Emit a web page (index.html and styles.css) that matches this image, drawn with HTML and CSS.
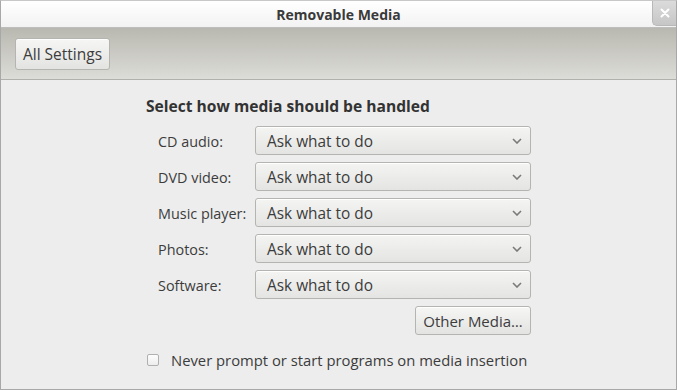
FILE: index.html
```html
<!DOCTYPE html>
<html lang="en">
<head>
  <meta charset="UTF-8" />
  <title>Removable Media</title>
  <link rel="stylesheet" href="styles.css">
</head>
<body>
  <div class="window">
    <header class="titlebar">
      <span class="title">Removable Media</span>
      <button class="close-btn" aria-label="Close">
        <svg width="10" height="10" viewBox="0 0 10 10"><path d="M1.5 1.5 L8.5 8.5 M8.5 1.5 L1.5 8.5" stroke="#fff" stroke-width="2" stroke-linecap="round"/></svg>
      </button>
    </header>

    <div class="toolbar">
      <button class="btn btn-settings">All Settings</button>
    </div>

    <main class="content">
      <h2 class="heading">Select how media should be handled</h2>

      <div class="media-grid">
        <label class="media-label">CD audio:</label>
        <div class="combo"><span>Ask what to do</span><svg class="chevron" width="10" height="6" viewBox="0 0 10 6"><path d="M1 1 L5 5 L9 1" fill="none" stroke="#7a7a7a" stroke-width="1.6"/></svg></div>

        <label class="media-label">DVD video:</label>
        <div class="combo"><span>Ask what to do</span><svg class="chevron" width="10" height="6" viewBox="0 0 10 6"><path d="M1 1 L5 5 L9 1" fill="none" stroke="#7a7a7a" stroke-width="1.6"/></svg></div>

        <label class="media-label">Music player:</label>
        <div class="combo"><span>Ask what to do</span><svg class="chevron" width="10" height="6" viewBox="0 0 10 6"><path d="M1 1 L5 5 L9 1" fill="none" stroke="#7a7a7a" stroke-width="1.6"/></svg></div>

        <label class="media-label">Photos:</label>
        <div class="combo"><span>Ask what to do</span><svg class="chevron" width="10" height="6" viewBox="0 0 10 6"><path d="M1 1 L5 5 L9 1" fill="none" stroke="#7a7a7a" stroke-width="1.6"/></svg></div>

        <label class="media-label">Software:</label>
        <div class="combo"><span>Ask what to do</span><svg class="chevron" width="10" height="6" viewBox="0 0 10 6"><path d="M1 1 L5 5 L9 1" fill="none" stroke="#7a7a7a" stroke-width="1.6"/></svg></div>
      </div>

      <div class="other-row">
        <button class="btn btn-other">Other Media…</button>
      </div>

      <label class="check-row">
        <span class="checkbox"></span>
        <span class="check-text">Never prompt or start programs on media insertion</span>
      </label>
    </main>
  </div>
</body>
</html>
```

FILE: styles.css
```css
:root {
  --text: #3c3c3c;
  --bg: #ededed;
  --border: #a8a8a8;
  --btn-border: #b4b4b0;
}

* {
  margin: 0;
  padding: 0;
  box-sizing: border-box;
}

body {
  font-family: 'Open Sans', 'DejaVu Sans', sans-serif;
  font-size: 14.4px;
  color: var(--text);
  background: #ffffff;
}

.window {
  width: 677px;
  height: 390px;
  border: 1px solid var(--border);
  border-top-color: #c8c8c8;
  background: var(--bg);
  display: flex;
  flex-direction: column;
  overflow: hidden;
}

.titlebar {
  position: relative;
  height: 27px;
  flex-shrink: 0;
  display: flex;
  align-items: center;
  justify-content: center;
  background: linear-gradient(#ffffff, #f2f2f2);
  border-bottom: 1px solid #bdbdbd;
}

.title {
  font-weight: 700;
  font-size: 14px;
  color: #3a3a3a;
}

.close-btn {
  position: absolute;
  right: 0;
  top: -1px;
  width: 24px;
  height: 26px;
  border: 1px solid #b8b8b8;
  border-top: none;
  border-right: none;
  border-radius: 0 0 0 5px;
  background: linear-gradient(#dcdcdc, #c6c6c6);
  display: flex;
  align-items: center;
  justify-content: center;
}

.toolbar {
  height: 52px;
  flex-shrink: 0;
  padding: 10px 14px;
  background: linear-gradient(#b9b8b0, #dcdcd8);
  border-bottom: 1px solid #b0b0ac;
}

.btn {
  font-family: inherit;
  font-size: 14.4px;
  color: var(--text);
  height: 32px;
  padding: 0 7px;
  border: 1px solid var(--btn-border);
  border-radius: 3px;
  background: linear-gradient(#f6f6f5, #e3e3e1);
  box-shadow: inset 0 1px 0 #ffffff;
}

.btn-settings {
  width: 95px;
  font-size: 15.5px;
  padding: 0;
}

.content {
  width: 385px;
  margin: 0 auto;
  padding-top: 16px;
}

.heading {
  font-size: 15.6px;
  font-weight: 700;
  line-height: 20px;
  color: #333333;
  margin-bottom: 10px;
}

.media-grid {
  display: grid;
  grid-template-columns: 109px 276px;
  row-gap: 7px;
  align-items: center;
}

.media-label {
  padding-left: 12px;
  padding-top: 1px;
}

.combo {
  height: 29px;
  display: flex;
  align-items: center;
  justify-content: space-between;
  padding: 1px 8px 0 11px;
  font-size: 15.4px;
  border: 1px solid var(--btn-border);
  border-radius: 3px;
  background: linear-gradient(#f4f4f3, #e4e4e2);
  box-shadow: inset 0 1px 0 #ffffff;
}

.other-row {
  display: flex;
  justify-content: flex-end;
  margin-top: 7px;
}

.btn-other {
  height: 29px;
  width: 116px;
  font-size: 15px;
  padding: 0;
}

.check-row {
  display: flex;
  align-items: center;
  gap: 12px;
  margin-top: 15px;
  padding-left: 1px;
}

.checkbox {
  width: 12px;
  height: 12px;
  border: 1px solid #b0b0b0;
  border-radius: 2px;
  background: linear-gradient(#fdfdfd, #ededed);
}

.check-text {
  font-size: 14.8px;
}
```
